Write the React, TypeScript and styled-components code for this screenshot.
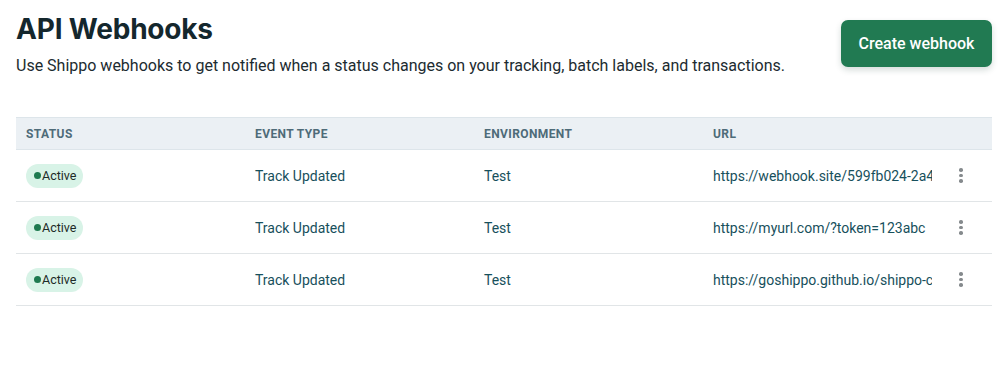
import { createGlobalStyle, styled } from "styled-components";

const rows = [
  { event: "Track Updated", env: "Test", url: "https://webhook.site/599fb024-2a4" },
  { event: "Track Updated", env: "Test", url: "https://myurl.com/?token=123abc" },
  { event: "Track Updated", env: "Test", url: "https://goshippo.github.io/shippo-c" },
];

export default function App() {
  return (
    <>
      <Global />
      <Page>
        <Top>
          <div>
            <Title>API Webhooks</Title>
            <Lead>
              Use Shippo webhooks to get notified when a status changes on your
              tracking, batch labels, and transactions.
            </Lead>
          </div>
          <CreateButton>Create webhook</CreateButton>
        </Top>
        <Table>
          <HeadRow>
            <HeadCell>Status</HeadCell>
            <HeadCell>Event type</HeadCell>
            <HeadCell>Environment</HeadCell>
            <HeadCell>URL</HeadCell>
            <HeadCell />
          </HeadRow>
          {rows.map((r, i) => (
            <Row key={i}>
              <Cell>
                <Badge>
                  <Dot />
                  Active
                </Badge>
              </Cell>
              <Cell>{r.event}</Cell>
              <Cell>{r.env}</Cell>
              <UrlCell>{r.url}</UrlCell>
              <Cell>
                <Kebab aria-label="More">
                  <span />
                  <span />
                  <span />
                </Kebab>
              </Cell>
            </Row>
          ))}
        </Table>
      </Page>
    </>
  );
}

const Global = createGlobalStyle`
  body {
    margin: 0;
    background: #ffffff;
    font-family: Roboto, "Noto Sans", sans-serif;
  }
`;

const Page = styled.div`
  padding: 12px 9px 0 16px;
`;

const Top = styled.div`
  display: flex;
  justify-content: space-between;
  align-items: flex-start;
`;

const Title = styled.h1`
  margin: 0;
  font-family: Inter, sans-serif;
  font-size: 28px;
  line-height: 34px;
  font-weight: 700;
  color: #14272d;
  letter-spacing: -0.2px;
`;

const Lead = styled.p`
  margin: 8px 0 0;
  font-size: 16px;
  line-height: 24px;
  color: #1c2b30;
  white-space: nowrap;
`;

const CreateButton = styled.button`
  margin-top: 8px;
  height: 47px;
  width: 151px;
  border: none;
  border-radius: 7px;
  background: #217a52;
  color: #ffffff;
  font-family: inherit;
  font-size: 16px;
  font-weight: 500;
  box-shadow: 0 3px 6px rgba(20, 60, 50, 0.18);
  cursor: pointer;
`;

const Table = styled.div`
  margin-top: 39px;
`;

const grid = `
  display: grid;
  grid-template-columns: 229px 229px 229px 229px 1fr;
`;

const HeadRow = styled.div`
  ${grid}
  height: 31px;
  align-items: center;
  background: #ebf0f4;
  border-top: 1px solid #dde5ea;
  border-bottom: 1px solid #dde5ea;
`;

const HeadCell = styled.div`
  padding-left: 10px;
  font-size: 12px;
  font-weight: 700;
  text-transform: uppercase;
  color: #4e6b78;
  letter-spacing: 0.4px;
`;

const Row = styled.div`
  ${grid}
  height: 51px;
  align-items: center;
  border-bottom: 1px solid #e1e5e7;
`;

const Cell = styled.div`
  padding-left: 10px;
  font-size: 14px;
  color: #17505c;
`;

const UrlCell = styled(Cell)`
  padding-right: 8px;
  white-space: nowrap;
  overflow: hidden;
`;

const Badge = styled.span`
  display: inline-flex;
  align-items: center;
  gap: 1px;
  height: 24px;
  padding: 0 7px 0 8px;
  border-radius: 12px;
  background: #d8f3e7;
  color: #1d2b28;
  font-size: 12.5px;
`;

const Dot = styled.span`
  width: 7px;
  height: 7px;
  border-radius: 50%;
  background: #1e7a50;
`;

const Kebab = styled.button`
  display: flex;
  flex-direction: column;
  align-items: center;
  gap: 2px;
  margin-left: 17px;
  padding: 0;
  border: none;
  background: none;
  cursor: pointer;
  span {
    width: 3.5px;
    height: 3.5px;
    border-radius: 50%;
    background: #858a8d;
  }
`;
